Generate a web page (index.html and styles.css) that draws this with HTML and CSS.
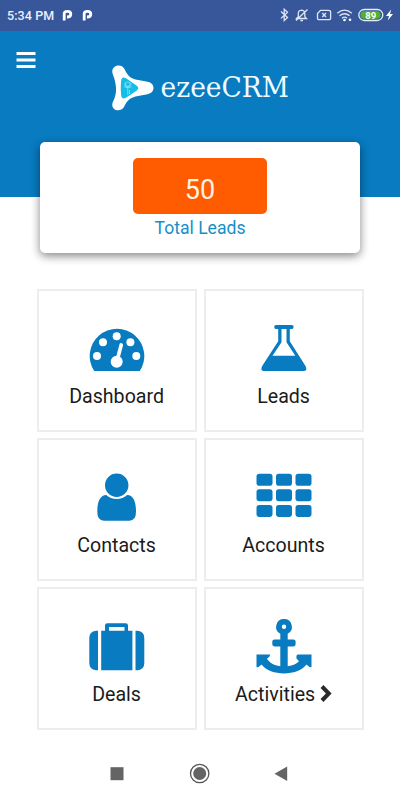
FILE: index.html
```html
<!DOCTYPE html>
<html lang="en">
<head>
<meta charset="utf-8">
<title>ezeeCRM</title>
<link rel="stylesheet" href="styles.css">
</head>
<body>
<header class="top">
  <div class="status">
    <span class="time">5:34 PM</span>
    <svg class="pmark" viewBox="0 0 11 13"><path d="M2.2 11.500V4.600Q2.200 2.400 5.400 2.400Q8.800 2.400 8.800 5.200Q8.800 8 5 8"/></svg>
    <svg class="pmark" viewBox="0 0 11 13"><path d="M2.2 11.500V4.600Q2.200 2.400 5.400 2.400Q8.800 2.400 8.800 5.200Q8.800 8 5 8"/></svg>
    <svg class="sys" width="122" height="20" viewBox="0 0 122 20">
      <g class="line">
        <path d="M4 6.5L10.5 12.5L7.2 15.6V4.2L10.5 7.3L4 13.4"/>
        <path d="M19.500 13.500H29.500L27.800 11.600V8.500Q27.800 5.500 24.600 5.200Q21.300 5.500 21.300 8.500V11.600ZM23.300 15.500H26M19 15.500L30.500 4.500"/>
        <path d="M43.500 5.300H51.500Q53.600 5.300 53.600 6.400V13.600Q53.600 14.700 52.500 14.700H41.600Q40.500 14.700 40.500 13.600V8.500Z"/>
        <path d="M45.300 8L49 12M49 8L45.300 12"/>
        <path d="M60.300 8.200Q67.500 2.200 74.800 8.200M62.500 10.800Q67.500 6.700 72.600 10.800M65 13.200Q67.500 11.200 70 13.200"/>
      </g>
      <circle class="white" cx="67.500" cy="15" r="1.300"/>
      <circle class="white" cx="73" cy="14.800" r="1.300"/>
      <rect class="cell" x="81.800" y="4.500" width="24" height="11" rx="5.500"/>
      <rect class="charge" x="83.500" y="6.200" width="20" height="7.600" rx="3.800"/>
      <text class="pct" x="93.800" y="13.500" text-anchor="middle">89</text>
      <path class="white" d="M114.200 4.500L109 11H112L110.800 15.600L116 9H113Z"/>
    </svg>
  </div>
  <div class="brandbar">
    <svg class="menu" width="20" height="18" viewBox="0 0 20 18"><path d="M.5 2.500H19.500M.5 9H19.500M.5 15.500H19.500"/></svg>
    <svg class="logo" width="200" height="56" viewBox="0 0 200 56">
      <path class="white" d="M0.300 10C-.3 3 9.500 1 12.500 7C15 12.500 17.500 16 23.500 17.500L35.500 19.800Q41.500 21 41.500 26Q41.500 31 35.500 32.200L23.500 34.500C17.500 36 15 39 12.500 44C9.500 51 -.5 49 .3 42C.5 39.500 4.500 35 4 26C3.500 17 .5 13 .3 10Z"/>
      <path class="gem" d="M9.100 19Q9.500 14.200 14 16.200L24.500 23.500Q28 26 24.500 28.700L14 35.800Q9.500 37.800 9.100 33Q8.300 26 9.100 19Z"/>
      <path class="motif" d="M15.800 24.500V33M12.500 21L15.800 25L19.300 21M12.300 25H19.500M17.500 28V32"/>
      <circle class="motif" cx="15.800" cy="22.800" r="2.800"/>
      <text class="name" x="48.500" y="35" textLength="128.500" lengthAdjust="spacingAndGlyphs">ezeeCRM</text>
    </svg>
  </div>
</header>
<section class="summary">
  <div class="count">50</div>
  <div class="caption">Total Leads</div>
</section>
<main class="grid">
  <a class="tile"><svg class="icon" viewBox="0 0 60 60">
    <path d="M7.200 54A27.300 27.300 0 1 1 52.800 54Z"/>
    <g class="hole"><circle cx="10" cy="39" r="4"/><circle cx="16" cy="25.300" r="4"/><circle cx="29.700" cy="19.300" r="4"/><circle cx="43.400" cy="25.300" r="4"/><circle cx="49.300" cy="39" r="4"/><circle cx="29.700" cy="44.700" r="6"/></g>
    <path class="needle" d="M30 44L34.200 28"/>
  </svg><span>Dashboard</span></a>
  <a class="tile"><svg class="icon" viewBox="0 0 60 60">
    <path fill-rule="evenodd" d="M22 8H37.800Q39.600 8 39.600 10T37.800 12H35.800V24.200L51.500 49Q54 54 49.500 54H10.200Q5.700 54 8.200 49L24.200 24.200V12H22Q20.200 12 20.200 10T22 8ZM27.500 12V25.200L18.500 38.800H41.300L32.500 25.200V12Z"/>
  </svg><span>Leads</span></a>
  <a class="tile"><svg class="icon" viewBox="0 0 60 60">
    <circle cx="29.700" cy="19.300" r="11.700"/>
    <path d="M19.300 29.100Q23.500 33 29.700 33T40.100 29.100C47 29.300 49 37 49 45.500Q49 54.700 42.500 54.700H16.900Q10.300 54.700 10.300 45.500C10.300 37 12.500 29.300 19.300 29.100Z"/>
  </svg><span>Contacts</span></a>
  <a class="tile"><svg class="icon" viewBox="0 0 60 60">
    <rect x="2.500" y="7.700" width="16" height="12" rx="2.800"/><rect x="22" y="7.700" width="16" height="12" rx="2.800"/><rect x="41.500" y="7.700" width="16" height="12" rx="2.800"/>
    <rect x="2.500" y="23.300" width="16" height="12" rx="2.800"/><rect x="22" y="23.300" width="16" height="12" rx="2.800"/><rect x="41.500" y="23.300" width="16" height="12" rx="2.800"/>
    <rect x="2.500" y="38.900" width="16" height="12" rx="2.800"/><rect x="22" y="38.900" width="16" height="12" rx="2.800"/><rect x="41.500" y="38.900" width="16" height="12" rx="2.800"/>
  </svg><span>Accounts</span></a>
  <a class="tile"><svg class="icon" viewBox="0 0 60 60">
    <path d="M11 15.800V55.200H9Q2.300 54.500 2.300 48V23Q2.300 16.500 9 15.800ZM48.500 15.800H50.700Q57.300 16.500 57.300 23V48Q57.300 54.500 50.700 55.200H48.500Z"/>
    <path fill-rule="evenodd" d="M14.200 15.800H18V10.500Q18 8.200 20.300 8.200H38.700Q41 8.200 41 10.500V15.800H45.400V55.200H14.200ZM22 12V15.800H37.500V12Z"/>
  </svg><span>Deals</span></a>
  <a class="tile"><svg class="icon" viewBox="0 0 60 60">
    <path fill-rule="evenodd" d="M30 4A7.800 7.800 0 0 1 33.700 18.700V24.400H39.500Q41.600 24.400 41.600 26.500V29.300Q41.600 31.400 39.500 31.400H33.700V51.200Q41.500 50 45 46.200L42.500 43.500Q42 39.400 44 39.400H57.500V52Q56 53 52.500 49.500C48 55.500 39 58.400 30 58.400C21 58.400 12 55.500 7.500 49.500Q4 53 2.500 52V39.400H15.800Q17 40.500 12.800 43.800L15 46.200Q18.500 50 26.300 51.200V31.400H20.500Q18.300 31.400 18.300 29.300V26.500Q18.300 24.400 20.500 24.400H26.300V18.700A7.800 7.800 0 0 1 30 4ZM30 9.600A2.200 2.200 0 1 0 30 14A2.200 2.200 0 1 0 30 9.600Z"/>
  </svg><span>Activities<svg class="next" width="12" height="18" viewBox="0 0 12 18"><path d="M2 1.500L8.800 8.500L2 15.500"/></svg></span></a>
</main>
<nav class="keys">
  <svg width="200" height="24" viewBox="0 0 200 24">
    <rect x="10.500" y="6.200" width="13" height="13"/>
    <circle class="ring" cx="99.700" cy="12.500" r="9.200"/><circle cx="99.700" cy="12.500" r="6.500"/>
    <path d="M174.500 12.700L187.200 5.500V20Z"/>
  </svg>
</nav>
</body>
</html>
```
FILE: styles.css
```css
* { box-sizing: border-box; }
body {
  margin: 0;
  width: 400px;
  height: 800px;
  overflow: hidden;
  background: #fff;
  font-family: Roboto, "Liberation Sans", sans-serif;
}
.top { height: 197px; background: #087bc1; }
.status {
  height: 31px;
  background: #38579b;
  display: flex;
  align-items: center;
  padding: 0 1px 1px 7px;
  color: #eaf1fb;
}
.time { width: 55px; font-size: 12.500px; font-weight: 500; letter-spacing: .1px; white-space: nowrap; }
.pmark { width: 11px; height: 13px; margin-right: 9px; fill: none; stroke: #fff; stroke-width: 2.800; }
.sys { margin-left: auto; }
.line { fill: none; stroke: #dce6f6; stroke-width: 1.300; }
.white { fill: #fff; }
.cell { fill: none; stroke: #e3eef3; stroke-width: 1.300; }
.charge { fill: #50b230; }
.pct { fill: #fff; font-size: 9.500px; font-weight: 700; }
.brandbar { display: flex; align-items: flex-start; padding: 20px 0 0 16px; }
.menu { stroke: #fff; stroke-width: 3.200; }
.logo { margin: 11px 0 0 76px; overflow: visible; }
.gem { fill: #15bde9; }
.motif { fill: none; stroke: #8de3f5; stroke-width: .8; }
.name {
  font-family: "DejaVu Serif", serif;
  font-size: 27.500px;
  fill: #effcff;
}
.summary {
  position: relative;
  width: 320px;
  height: 111px;
  margin: -55px 0 0 40px;
  padding-top: 16px;
  border-radius: 5px;
  background: #fff;
  box-shadow: 0 3px 10px rgba(0, 0, 0, .48);
  text-align: center;
}
.count {
  width: 134px;
  height: 56px;
  margin: 0 auto;
  border-radius: 5px;
  background: #ff5b00;
  color: #fff3e5;
  font-size: 27px;
  line-height: 64px;
}
.caption { color: #1590c5; font-size: 17.600px; line-height: 28px; }
.grid {
  display: grid;
  grid-template-columns: 160px 160px;
  grid-auto-rows: 142.500px;
  gap: 6.500px 7px;
  margin: 36.400px 0 0 36.600px;
}
.tile {
  display: flex;
  flex-direction: column;
  align-items: center;
  border: 2px solid #ededed;
  padding-top: 25.500px;
  color: #1b1b1b;
  font-size: 19.600px;
  line-height: 40px;
}
.icon { width: 60px; height: 60px; flex: none; fill: #087bc1; }
.hole { fill: #fff; }
.needle { stroke: #fff; stroke-width: 3.700; stroke-linecap: round; }
.tile span { display: flex; align-items: center; }
.next { margin: -2px 0 0 5px; fill: none; stroke: #2a2a2a; stroke-width: 4; }
.keys { display: flex; justify-content: center; margin-top: 31px; }
.keys svg { fill: #646464; }
.keys .ring { fill: none; stroke: #555; stroke-width: 1.300; }
```
